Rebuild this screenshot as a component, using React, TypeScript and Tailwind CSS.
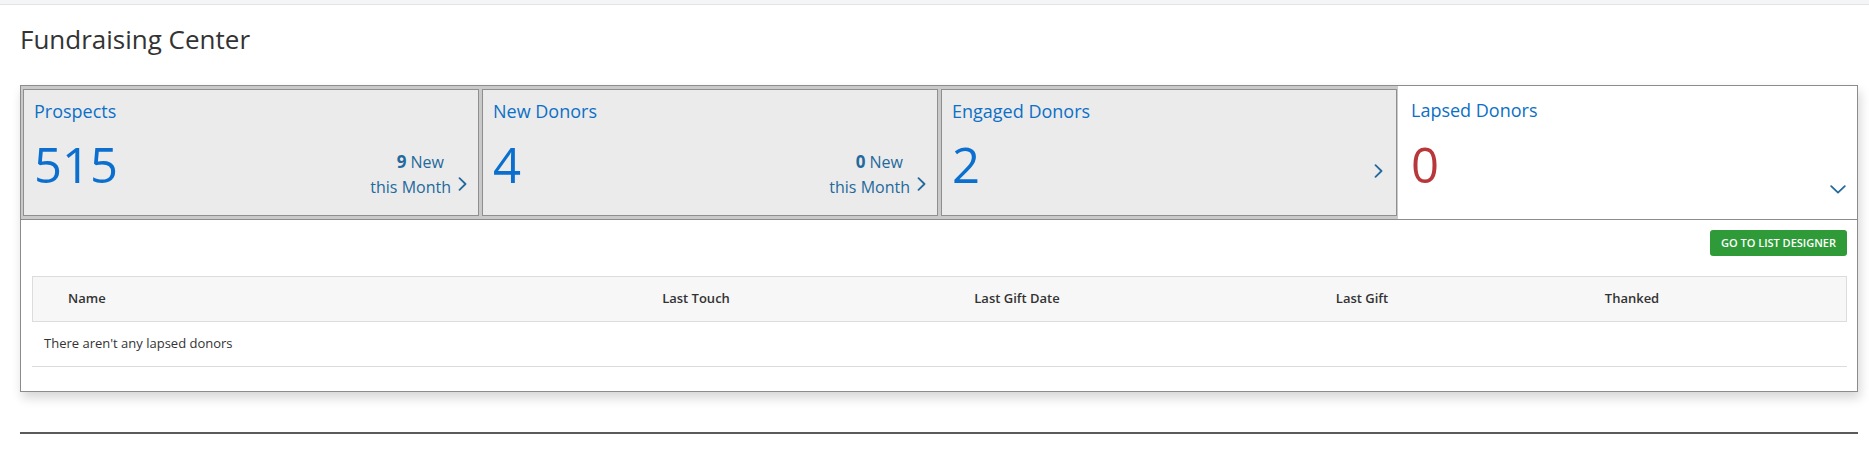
import React from 'react';

type Segment = {
  title: string;
  count: number;
  newThisMonth?: number;
};

const SEGMENTS: Segment[] = [
  { title: 'Prospects', count: 515, newThisMonth: 9 },
  { title: 'New Donors', count: 4, newThisMonth: 0 },
  { title: 'Engaged Donors', count: 2 },
];

const COLUMNS = ['Name', 'Last Touch', 'Last Gift Date', 'Last Gift', 'Thanked'];

const ChevronRight = ({ className = '' }: { className?: string }) => (
  <svg width="9" height="14" viewBox="0 0 9 14" className={className} fill="none">
    <path d="M1.5 1.2 L7.5 7 L1.5 12.8" stroke="#24699c" strokeWidth="1.8" strokeLinecap="round" strokeLinejoin="round" />
  </svg>
);

const ChevronDown = ({ className = '' }: { className?: string }) => (
  <svg width="16" height="9" viewBox="0 0 16 9" className={className} fill="none">
    <path d="M1.2 1.2 L8 7.6 L14.8 1.2" stroke="#24699c" strokeWidth="1.8" strokeLinecap="round" strokeLinejoin="round" />
  </svg>
);

const SegmentCard = ({ seg }: { seg: Segment }) => (
  <div className="pt-[3px] pb-[3px] pl-[2px] pr-[1px]">
    <div className="h-[127px] border border-[#8f8f8f] bg-[#ebebeb] pt-[9px] pl-[10px] pr-[11px] cursor-pointer">
      <div className="text-[18px] leading-[24px] text-[#0c70c6]">{seg.title}</div>
      <div className="flex justify-between items-start mt-[17px]">
        <div className="text-[49px] leading-none text-[#0a6fcf]">{seg.count}</div>
        {seg.newThisMonth !== undefined ? (
          <div className="flex items-end pt-[9px]">
            <div className="text-right text-[16px] leading-[25px] text-[#24699c]">
              <div className="mr-[7px]">
                <span className="font-bold text-[17px]">{seg.newThisMonth}</span> New
              </div>
              <div>this Month</div>
            </div>
            <ChevronRight className="ml-[7px] mb-[9px]" />
          </div>
        ) : (
          <ChevronRight className="mt-[24px] mr-[2px]" />
        )}
      </div>
    </div>
  </div>
);

const App: React.FC = () => {
  return (
    <div className="w-full min-h-screen bg-white font-['Open_Sans',sans-serif] text-[#333]">
      <div className="h-[5px] bg-[#f4f5f7] border-b border-[#e3e3e3]" />

      <div className="pl-[20px] pr-[11px]">
        <h1 className="mt-[16px] text-[26px] leading-[36px] font-normal text-[#333]">Fundraising Center</h1>

        <div className="mt-[28px] border border-[#8c8c8c] bg-white shadow-[2px_6px_10px_rgba(0,0,0,0.16)]">
          {/* segment tabs */}
          <div className="grid grid-cols-4 bg-[#c9c9c9] border-b border-[#8c8c8c]">
            {SEGMENTS.map(seg => (
              <SegmentCard key={seg.title} seg={seg} />
            ))}
            <div className="bg-white pt-[12px] pl-[13px] pr-[11px]">
              <div className="text-[18px] leading-[24px] text-[#0c70c6]">Lapsed Donors</div>
              <div className="flex justify-between items-start mt-[18px]">
                <div className="text-[49px] leading-none text-[#b8373b]">0</div>
                <ChevronDown className="mt-[45px]" />
              </div>
            </div>
          </div>

          {/* lapsed donors list */}
          <div className="pt-[10px] pb-[24px] pl-[11px] pr-[10px]">
            <div className="flex justify-end">
              <button className="h-[26px] px-[11px] rounded-[3px] bg-[#2e9b38] text-white text-[11px] font-semibold uppercase">
                Go to List Designer
              </button>
            </div>

            <div className="mt-[20px]">
              <div className="grid grid-cols-[528px_270px_372px_318px_222px_1fr] items-center h-[46px] bg-[#f7f7f7] border border-[#dcdcdc] text-[13px] font-semibold text-[#333]">
                {COLUMNS.map((col, i) => (
                  <div key={col} className={i === 0 ? 'pl-[35px]' : 'text-center'}>
                    {col}
                  </div>
                ))}
                <div />
              </div>
              <div className="h-[45px] flex items-center pl-[12px] border-b border-[#dcdcdc] text-[13px] text-[#333]">
                There aren't any lapsed donors
              </div>
            </div>
          </div>
        </div>

        <div className="mt-[40px] h-[2px] bg-[#5a5a5a]" />
      </div>
    </div>
  );
};

export default App;
